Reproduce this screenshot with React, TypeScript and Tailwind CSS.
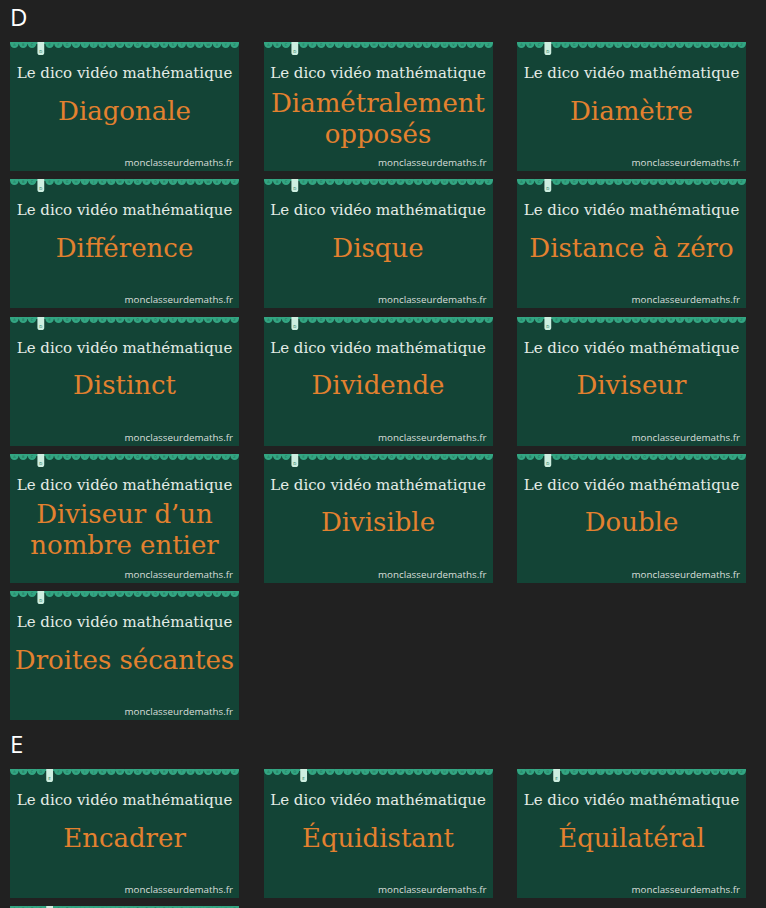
const LETTERS = 'ABCDEFGHIJKLMNOPQRSTUVWXYZ'.split('');

type Entry = { lines: string[] };

const SECTIONS: { letter: string; entries: Entry[] }[] = [
  {
    letter: 'D',
    entries: [
      { lines: ['Diagonale'] },
      { lines: ['Diamétralement', 'opposés'] },
      { lines: ['Diamètre'] },
      { lines: ['Différence'] },
      { lines: ['Disque'] },
      { lines: ['Distance à zéro'] },
      { lines: ['Distinct'] },
      { lines: ['Dividende'] },
      { lines: ['Diviseur'] },
      { lines: ['Diviseur d’un', 'nombre entier'] },
      { lines: ['Divisible'] },
      { lines: ['Double'] },
      { lines: ['Droites sécantes'] },
    ],
  },
  {
    letter: 'E',
    entries: [
      { lines: ['Encadrer'] },
      { lines: ['Équidistant'] },
      { lines: ['Équilatéral'] },
      { lines: ['Équation'] },
    ],
  },
];

// bande alphabet en haut de chaque vignette
function AlphabetStrip({ active }: { active: string }) {
  const step = 229 / 26;
  const idx = LETTERS.indexOf(active);
  return (
    <svg viewBox="0 0 229 14" className="absolute left-0 top-0 w-full h-[14px]">
      <rect x="0" y="0" width="229" height="2" fill="#2f9e7c" />
      {LETTERS.map((l, i) => {
        if (i === idx) return null;
        const cx = step * i + step / 2;
        return (
          <g key={l}>
            <circle cx={cx} cy="1.6" r="4.3" fill="#33a582" />
            <text
              x={cx}
              y="4.4"
              fontSize="3.6"
              textAnchor="middle"
              fill="#1b6b52"
              fontFamily="DejaVu Sans, sans-serif"
            >
              {l}
            </text>
          </g>
        );
      })}
      <rect x={step * idx + step / 2 - 3.4} y="-3" width="6.8" height="16" rx="2.6" fill="#cdeee0" />
      <text
        x={step * idx + step / 2}
        y="10.8"
        fontSize="4"
        textAnchor="middle"
        fill="#2c7a60"
        fontFamily="DejaVu Sans, sans-serif"
      >
        {active}
      </text>
    </svg>
  );
}

function Card({ letter, entry }: { letter: string; entry: Entry }) {
  const twoLines = entry.lines.length > 1;
  return (
    <div className="relative h-[129px] bg-[#134436] flex flex-col overflow-hidden">
      <AlphabetStrip active={letter} />
      <div className="pt-[21px] text-center text-[15px] leading-[20px] text-[#e4ece6] whitespace-nowrap [font-family:'DejaVu_Serif',serif]">
        Le dico vidéo mathématique
      </div>
      <div
        className={`flex-1 flex flex-col items-center justify-center text-[#e3812f] text-[26px] leading-[31px] whitespace-nowrap [font-family:'DejaVu_Serif',serif] ${
          twoLines ? 'pb-[2px]' : 'pb-[17px]'
        }`}
      >
        {entry.lines.map((line) => (
          <span key={line}>{line}</span>
        ))}
      </div>
      <div className="pr-[6px] pb-[1px] text-right text-[9.8px] leading-[14px] text-[#d9dfdb] [font-family:'Open_Sans',sans-serif]">
        monclasseurdemaths.fr
      </div>
    </div>
  );
}

export default function App() {
  return (
    <div className="min-h-screen bg-[#212121] flex flex-col gap-[7px] pb-10">
      {SECTIONS.map((section) => (
        <section key={section.letter}>
          <h2 className="h-[42px] pl-[10px] text-[24px] leading-[34px] font-normal text-white [font-family:'Open_Sans',sans-serif]">
            {section.letter}
          </h2>
          <div className="grid grid-cols-[229px_229px_229px] gap-x-[24.5px] gap-y-[8.3px] pl-[10px]">
            {section.entries.map((entry) => (
              <Card key={entry.lines.join(' ')} letter={section.letter} entry={entry} />
            ))}
          </div>
        </section>
      ))}
    </div>
  );
}
